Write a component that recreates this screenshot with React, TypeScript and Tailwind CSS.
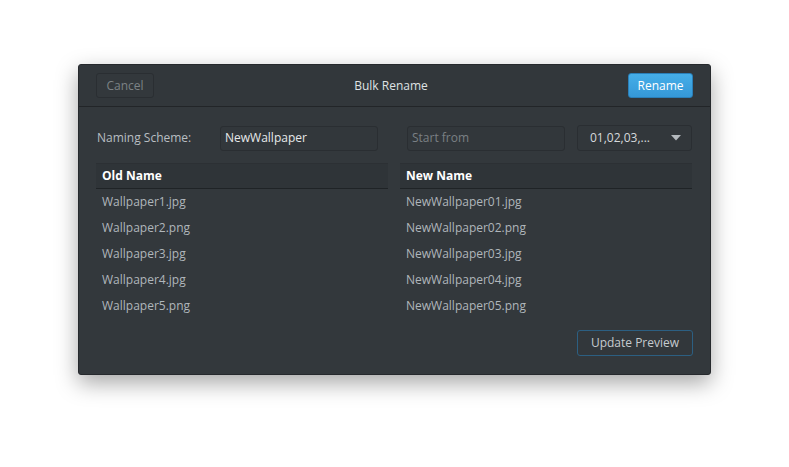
import React from "react";

const oldNames = ["Wallpaper1.jpg", "Wallpaper2.png", "Wallpaper3.jpg", "Wallpaper4.jpg", "Wallpaper5.png"];
const newNames = ["NewWallpaper01.jpg", "NewWallpaper02.png", "NewWallpaper03.jpg", "NewWallpaper04.jpg", "NewWallpaper05.png"];

function Column({ title, items }: { title: string; items: string[] }) {
  return (
    <div className="flex flex-col w-[292px]">
      <div className="h-[26px] flex items-center px-[6px] bg-[#2f3438] border-t border-t-[#2c3034] border-b border-b-[#1f2326] font-bold text-white">
        {title}
      </div>
      {items.map((n) => (
        <div key={n} className="h-[26px] flex items-center px-[6px] text-[#b0b6bb]">
          {n}
        </div>
      ))}
    </div>
  );
}

export default function App() {
  return (
    <div
      className="min-h-[467px] bg-white pt-[64px] pl-[78px]"
      style={{ fontFamily: '"Open Sans", "Noto Sans", sans-serif' }}
    >
      <div className="w-[633px] h-[311px] bg-[#33383c] rounded-[3px] border border-[#26292d] shadow-[0_8px_22px_rgba(0,0,0,0.35)] flex flex-col text-[12px] overflow-hidden">
        <div className="h-[42px] shrink-0 flex items-center justify-between px-[17px] bg-[#32373b] border-b border-[#222528]">
          <div className="w-[58px] h-[25px] flex items-center justify-center rounded-[3px] border border-[#2a2e32] bg-[#33383c] text-[#7c8285]">
            Cancel
          </div>
          <div className="text-[#dfe2e4]">Bulk Rename</div>
          <div className="w-[65px] h-[25px] flex items-center justify-center rounded-[3px] border border-[#2a7fb8] bg-gradient-to-b from-[#45aee8] to-[#3598d8] text-white">
            Rename
          </div>
        </div>
        <div className="flex-1 flex flex-col px-[17px] pt-[18px]">
          <div className="flex items-center h-[26px]">
            <div className="w-[124px] pl-[1px] text-[#b8bec2]">Naming Scheme:</div>
            <div className="w-[158px] h-[25px] flex items-center px-[4px] rounded-[3px] border border-[#2a2e32] bg-[#32373b] text-[#e6e8ea]">
              NewWallpaper
            </div>
            <div className="ml-[29px] w-[158px] h-[25px] flex items-center px-[4px] rounded-[3px] border border-[#2a2e32] bg-[#32373b] text-[#7a8084]">
              Start from
            </div>
            <div className="ml-[12px] w-[115px] h-[26px] flex items-center justify-between pl-[12px] pr-[10px] rounded-[3px] border border-[#2a2e32] bg-[#32373b] text-[#d6d9dc]">
              <span>01,02,03,...</span>
              <svg width="10" height="6" viewBox="0 0 10 6">
                <path d="M0 0 L10 0 L5 5.5 Z" fill="#b4b9bd" />
              </svg>
            </div>
          </div>
          <div className="flex gap-[12px] mt-[12px]">
            <Column title="Old Name" items={oldNames} />
            <Column title="New Name" items={newNames} />
          </div>
          <div className="flex justify-end mt-[11px]">
            <div className="w-[116px] h-[26px] flex items-center justify-center rounded-[3px] border border-[#2c5f82] bg-[#32373b] text-[#c6cbcf]">
              Update Preview
            </div>
          </div>
        </div>
      </div>
    </div>
  );
}
